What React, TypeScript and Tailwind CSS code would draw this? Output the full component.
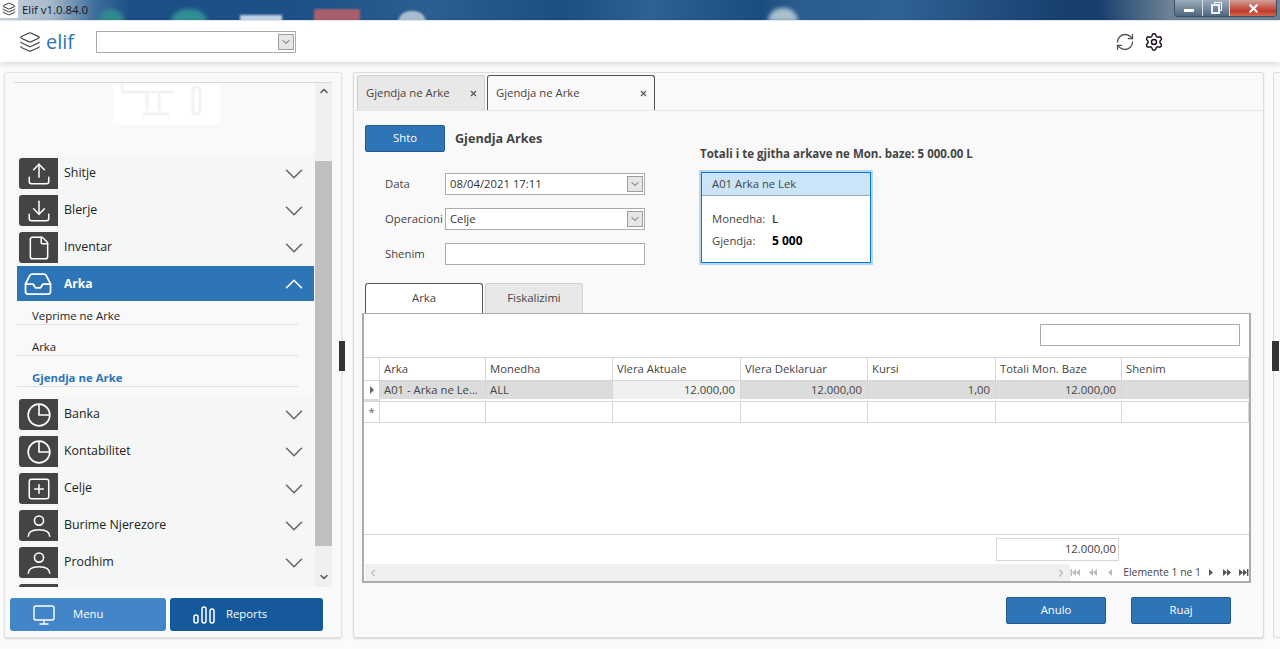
import { ChevronDown, ChevronUp, Download, File, Inbox, Layers, Monitor, RefreshCw, Settings, SquarePlus, Upload, X } from "lucide-react";
import type { ComponentType, ReactNode } from "react";

const font = "font-['Open_Sans','Noto_Sans',sans-serif]";

type IconProps = { className?: string; strokeWidth?: number };

// circle with one quarter marked, lucide's pie is offset so it doesn't match
const Pie = ({ className }: IconProps) => (
  <svg viewBox="0 0 24 24" fill="none" stroke="currentColor" strokeWidth="1.5" className={className}>
    <circle cx="12" cy="12" r="10" />
    <path d="M12 2v10h10" />
  </svg>
);

const Person = ({ className }: IconProps) => (
  <svg viewBox="0 0 24 24" fill="none" stroke="currentColor" strokeWidth="1.5" className={className}>
    <circle cx="12" cy="7" r="4.2" />
    <path d="M2 22c0-4.5 4.5-6.5 10-6.5s10 2 10 6.5" />
  </svg>
);

const MenuRow = ({ icon: Icon, label }: { icon: ComponentType<IconProps>; label: string }) => (
  <div className="h-[37px] flex items-center bg-[#f5f7f6] pl-[2px] shrink-0">
    <div className="w-[39px] h-[31px] bg-[#444444] rounded-l-[3px] flex items-center justify-center">
      <Icon className="w-[26px] h-[26px] text-white" strokeWidth={1.4} />
    </div>
    <span className="ml-[6px] text-[12.4px] text-[#222] flex-1">{label}</span>
    <ChevronDown className="w-[30px] h-[30px] mr-[6px] text-[#666]" strokeWidth={1.25} />
  </div>
);

const SubRow = ({ label, active, h }: { label: string; active?: boolean; h: string }) => (
  <div className={`${h} mr-[17px] border-b border-[#e0e0e0] flex items-end pl-[15px] text-[11.4px] leading-[16px] ${active ? "font-bold text-[#2e75b8]" : "text-[#222]"}`}>
    {label}
  </div>
);

const Combo = ({ value, className }: { value: string; className: string }) => (
  <div className={`${className} h-[22px] border border-[#ababab] bg-white flex items-center pl-[4px] pr-[1px] text-[11.3px] text-[#333]`}>
    <span className="flex-1">{value}</span>
    <div className="w-[16px] h-[16px] bg-[#e6e6e6] border border-[#9c9c9c] flex items-center justify-center">
      <ChevronDown className="w-[12px] h-[12px] text-[#555]" strokeWidth={2} />
    </div>
  </div>
);

const FormRow = ({ label, children }: { label: string; children: ReactNode }) => (
  <div className="flex items-center h-[22px]">
    <span className="w-[60px] ml-[20px] text-[11.3px] text-[#444]">{label}</span>
    {children}
  </div>
);

const PageTab = ({ active, w }: { active?: boolean; w: string }) => (
  <div className={`${w} h-[35px] rounded-t-[3px] border border-b-0 flex items-center pl-[8px] text-[11.3px] text-[#444] ${active ? "border-[#555] bg-[#f9f9f9]" : "border-[#cfcfcf] bg-[#e8e8e8]"}`}>
    <span className="flex-1">Gjendja ne Arke</span>
    <X className="w-[9px] h-[9px] mr-[6px] text-[#555]" strokeWidth={3} />
  </div>
);

const columns = ["Arka", "Monedha", "Vlera Aktuale", "Vlera Deklaruar", "Kursi", "Totali Mon. Baze", "Shenim"];
const gridCols = "grid grid-cols-[16px_106px_127px_128px_127px_128px_126px_1fr]";

const Cell = ({ children, right, className = "" }: { children?: ReactNode; right?: boolean; className?: string }) => (
  <div className={`border-r border-[#d6d6d6] flex items-center text-[11.3px] text-[#444] overflow-hidden whitespace-nowrap ${right ? "justify-end pr-[5px]" : "px-[4px]"} ${className}`}>
    {children}
  </div>
);

const Tri = ({ flip, bar, n = 1 }: { flip?: boolean; bar?: boolean; n?: number }) => (
  <svg width="11" height="9" viewBox="0 0 11 9" className={flip ? "-scale-x-100" : ""} fill="currentColor">
    {n === 2 && <path d="M1 1l4 3.5L1 8z" />}
    <path d={n === 2 ? "M5 1l4 3.5L5 8z" : "M3 1l4 3.5L3 8z"} />
    {bar && <rect x="9" y="1" width="1.4" height="7" />}
  </svg>
);

export default function App() {
  return (
    <div className={`${font} w-[1280px] h-[649px] overflow-hidden bg-[#fbfbfb] flex flex-col`}>
      {/* window title bar, blurred desktop shows through */}
      <div className="h-[21px] shrink-0 relative overflow-hidden border-b border-[#e8eef3] flex items-start bg-[linear-gradient(90deg,#c9d1da_0px,#a9bacb_50px,#3f6d9b_95px,#1c4f85_130px,#1d5086_300px,#2b5e92_430px,#1c4d83_560px,#2d6295_650px,#1a4c80_760px,#2a5c8e_800px,#2f6193_900px,#17406f_1060px,#18406e_1100px,#6f8296_1170px)]">
        <div className="absolute left-[98px] top-[9px] w-[26px] h-[16px] bg-[#2f8a8e] rounded-t-full blur-[2px]" />
        <div className="absolute left-[170px] top-[9px] w-[38px] h-[16px] bg-[#2f8f95] rounded-t-full blur-[2px]" />
        <div className="absolute left-[240px] top-[15px] w-[42px] h-[8px] bg-[#c2d4e8] blur-[1px]" />
        <div className="absolute left-[314px] top-[9px] w-[46px] h-[14px] bg-[#a85f6c] blur-[1px]" />
        <div className="absolute left-[398px] top-[11px] w-[28px] h-[12px] bg-[#a9bccf] rounded-t-full blur-[1px]" />
        <div className="absolute left-[768px] top-[8px] w-[30px] h-[14px] bg-[#a9c0cf] rounded-t-full blur-[2px]" />
        <div className="relative w-[18px] h-[18px] bg-white flex items-center justify-center">
          <Layers className="w-[14px] h-[14px] text-[#222]" strokeWidth={1.6} />
        </div>
        <span className="relative ml-[4px] text-[11.4px] leading-[20px] text-[#10161d] flex-1">Elif v1.0.84.0</span>
        <div className="relative mr-[3px] h-[17px] w-[103px] flex rounded-b-[4px] border border-t-0 border-[#3c4e61] overflow-hidden">
          <div className="w-[28px] border-r border-[#d7dde4] bg-[linear-gradient(#9eacbb,#4f6780)] flex items-center justify-center">
            <div className="w-[10px] h-[3px] mt-[5px] bg-white" />
          </div>
          <div className="w-[27px] border-r border-[#d7dde4] bg-[linear-gradient(#9eacbb,#4f6780)] flex items-center justify-center">
            <svg width="11" height="12" viewBox="0 0 11 12" fill="none" stroke="#fff">
              <path d="M3.5 2.5V.5h7v8H8.5" />
              <rect x="1" y="3" width="7" height="8" strokeWidth="2" stroke="#eef2f6" />
            </svg>
          </div>
          <div className="flex-1 bg-[linear-gradient(#d0a097,#c0392b_70%,#d26a50)] flex items-center justify-center">
            <X className="w-[13px] h-[13px] text-white" strokeWidth={4} />
          </div>
        </div>
      </div>

      {/* app header */}
      <div className="h-[41px] shrink-0 bg-white shadow-[0_2px_6px_rgba(0,0,0,0.14)] flex items-center relative">
        <Layers className="ml-[19px] w-[22px] h-[22px] text-[#444]" strokeWidth={1.3} />
        <span className="ml-[5px] text-[20px] leading-[24px] text-[#2e75b8] w-[50px]">elif</span>
        <Combo value="" className="w-[200px]" />
        <div className="flex-1" />
        <RefreshCw className="w-[20px] h-[20px] text-[#555]" strokeWidth={1.6} />
        <Settings className="ml-[9px] mr-[116px] w-[20px] h-[20px] text-[#1a0a1a]" strokeWidth={1.7} />
      </div>

      {/* body */}
      <div className="flex-1 min-h-0 flex pt-[10px] pb-[11px] pl-[4px] relative">
        {/* left panel */}
        <div className="w-[338px] shrink-0 bg-[#f9f9f9] border border-[#e4e4e4] rounded-[3px] shadow-[0_1px_2px_rgba(0,0,0,0.15)] pt-[9px] flex flex-col">
          <div className="ml-[9px] w-[318px] h-[505px] border-t border-[#d8d8d8] flex overflow-hidden">
            <div className="flex-1 min-w-0 overflow-hidden pl-[3px]">
              <div className="h-[42px] flex justify-center">
                <div className="w-[107px] bg-white">
                  <svg width="107" height="42" viewBox="0 0 107 42" fill="none" stroke="#f3f3f3" strokeWidth="3">
                    <path d="M9 0v6q0 3 3 3h50M34 10v18M46 10v18M30 31h26" />
                    <rect x="80" y="4" width="7" height="27" rx="3" />
                  </svg>
                </div>
              </div>
              <div className="h-[30px]" />
              <MenuRow icon={Upload} label="Shitje" />
              <MenuRow icon={Download} label="Blerje" />
              <MenuRow icon={File} label="Inventar" />
              <div className="h-[35px] mr-[1px] bg-[#2e75b8] flex items-center pl-[6px]">
                <Inbox className="w-[30px] h-[30px] text-white" strokeWidth={1.4} />
                <span className="ml-[11px] text-[12px] font-bold text-white flex-1">Arka</span>
                <ChevronUp className="w-[30px] h-[30px] mr-[5px] text-white" strokeWidth={1.25} />
              </div>
              <SubRow label="Veprime ne Arke" h="h-[24px]" />
              <SubRow label="Arka" h="h-[31px]" />
              <SubRow label="Gjendja ne Arke" active h="h-[31px]" />
              <div className="h-[9px]" />
              <MenuRow icon={Pie} label="Banka" />
              <MenuRow icon={Pie} label="Kontabilitet" />
              <MenuRow icon={SquarePlus} label="Celje" />
              <MenuRow icon={Person} label="Burime Njerezore" />
              <MenuRow icon={Person} label="Prodhim" />
              <MenuRow icon={Person} label="" />
            </div>
            <div className="w-[17px] shrink-0 bg-[#f0f0f0] flex flex-col items-center">
              <div className="h-[78px] w-full flex justify-center pt-[2px]">
                <ChevronUp className="w-[12px] h-[12px] text-[#555]" strokeWidth={3} />
              </div>
              <div className="w-full h-[385px] bg-[#bfbfbf]" />
              <ChevronDown className="mt-[25px] w-[12px] h-[12px] text-[#555]" strokeWidth={3} />
            </div>
          </div>
          <div className="ml-[5px] mt-[11px] flex gap-[4px]">
            <div className="w-[156px] h-[33px] rounded-[3px] bg-[#4285c8] flex items-center text-white text-[11.3px]">
              <Monitor className="ml-[22px] w-[24px] h-[24px]" strokeWidth={1.4} />
              <span className="ml-[17px]">Menu</span>
            </div>
            <div className="w-[153px] h-[33px] rounded-[3px] bg-[#15599b] flex items-center text-white text-[11.3px]">
              <svg width="22" height="18" viewBox="0 0 22 18" fill="none" stroke="currentColor" strokeWidth="1.5" className="ml-[23px]">
                <rect x="1" y="9" width="4" height="8" rx="2" />
                <rect x="9" y="1" width="4" height="16" rx="2" />
                <rect x="17" y="3" width="4" height="14" rx="2" />
              </svg>
              <span className="ml-[11px]">Reports</span>
            </div>
          </div>
        </div>

        {/* splitter handle */}
        <div className="absolute left-[339px] top-[279px] w-[6px] h-[30px] bg-[#333]" />

        {/* main panel */}
        <div className="ml-[11px] w-[911px] shrink-0 bg-[#f9f9f9] border border-[#dcdcdc] rounded-[3px] shadow-[0_1px_2px_rgba(0,0,0,0.15)] flex flex-col">
          <div className="h-[38px] pt-[2px] pl-[3px] flex items-end gap-[2px] border-b border-[#e6e6e6] shrink-0">
            <PageTab w="w-[128px]" />
            <PageTab w="w-[168px]" active />
          </div>

          <div className="pl-[11px] pt-[14px] pr-[11px] flex-1 flex flex-col min-h-0">
            <div className="flex h-[140px]">
              <div className="w-[335px]">
                <div className="flex items-center">
                  <div className="w-[80px] h-[27px] bg-[#2e75b8] border border-[#22598f] rounded-[2px] flex items-center justify-center text-white text-[11.3px]">Shto</div>
                  <span className="ml-[10px] mt-[1px] text-[12.6px] font-bold text-[#444]">Gjendja Arkes</span>
                </div>
                <div className="mt-[21px] flex flex-col gap-[13px]">
                  <FormRow label="Data"><Combo value="08/04/2021 17:11" className="w-[200px]" /></FormRow>
                  <FormRow label="Operacioni"><Combo value="Celje" className="w-[200px]" /></FormRow>
                  <FormRow label="Shenim"><div className="w-[200px] h-[22px] bg-white border border-[#ababab]" /></FormRow>
                </div>
              </div>
              <div className="pt-[21px]">
                <div className="text-[11.5px] leading-[16px] font-bold text-[#444] whitespace-nowrap">Totali i te gjitha arkave ne Mon. baze: 5 000.00 L</div>
                <div className="mt-[8px] -ml-[1px] w-[174px] h-[95px] border-2 border-[#b4d6ef]">
                  <div className="h-full border border-[#0a78d2] bg-white">
                    <div className="h-[23px] bg-[#cce4f7] border-b border-[#a0aab4] pl-[10px] flex items-center text-[11.3px] text-[#444]">A01 Arka ne Lek</div>
                    <div className="pl-[10px] pt-[12px] text-[11.3px] text-[#444]">
                      <div className="flex h-[22px] items-center"><span className="w-[60px]">Monedha:</span><span className="font-semibold text-[#333]">L</span></div>
                      <div className="flex h-[22px] items-center"><span className="w-[60px]">Gjendja:</span><span className="text-[12px] font-bold text-black">5 000</span></div>
                    </div>
                  </div>
                </div>
              </div>
            </div>

            {/* inner tabs */}
            <div className="mt-[18px] flex gap-[2px] h-[30px] shrink-0">
              <div className="w-[118px] border border-b-0 border-[#555] rounded-t-[3px] bg-white flex items-center justify-center text-[11.3px] text-[#444]">Arka</div>
              <div className="w-[98px] border border-b-0 border-[#d2d2d2] rounded-t-[3px] bg-[#e8e8e8] flex items-center justify-center text-[11.3px] text-[#444]">Fiskalizimi</div>
            </div>

            <div className="-ml-[3px] w-[889px] h-[270px] bg-white border-2 border-t border-[#acacac] flex flex-col">
              <div className="h-[44px] flex justify-end items-start pt-[10px] pr-[9px] border-b border-[#d6d6d6] shrink-0">
                <div className="w-[200px] h-[22px] border border-[#ababab] bg-white" />
              </div>
              <div className={`${gridCols} h-[23px] border-b border-[#d6d6d6] shrink-0`}>
                <Cell />
                {columns.map((c) => <Cell key={c}>{c}</Cell>)}
              </div>
              <div className={`${gridCols} h-[21px] border-b border-[#d6d6d6] shrink-0`}>
                <Cell className="justify-center !px-0 text-[#666]"><svg width="6" height="8" viewBox="0 0 6 8" fill="currentColor"><path d="M1 0l4 4-4 4z" /></svg></Cell>
                <Cell className="bg-[#dcdcdc]">A01 - Arka ne Le...</Cell>
                <Cell className="bg-[#dcdcdc]">ALL</Cell>
                <Cell right className="bg-[#f0f0f0]">12.000,00</Cell>
                <Cell right className="bg-[#dcdcdc]">12.000,00</Cell>
                <Cell right className="bg-[#dcdcdc]">1,00</Cell>
                <Cell right className="bg-[#dcdcdc]">12.000,00</Cell>
                <Cell className="bg-[#dcdcdc]" />
                <div className="bg-[#dcdcdc]" />
              </div>
              <div className={`${gridCols} h-[21px] border-b border-[#d6d6d6] shrink-0`}>
                <Cell className="justify-center !px-0 text-[#666]">*</Cell>
                <Cell /><Cell /><Cell /><Cell /><Cell /><Cell /><Cell />
              </div>
              <div className="flex-1 border-b border-[#d6d6d6]" />
              <div className="h-[29px] shrink-0 flex items-start pt-[3px] pl-[632px]">
                <div className="w-[123px] h-[23px] border border-[#d6d6d6] flex items-center justify-end pr-[2px] text-[11.3px] text-[#444]">12.000,00</div>
              </div>
              <div className="h-[17px] shrink-0 flex items-center">
                <div className="w-[706px] ml-[1px] h-full bg-[#f0f0f0] flex items-center justify-between px-[3px] text-[#bbb]">
                  <ChevronDown className="w-[10px] h-[10px] rotate-90" strokeWidth={3} />
                  <ChevronDown className="w-[12px] h-[12px] -rotate-90" strokeWidth={3} />
                </div>
                <div className="flex items-center text-[#bbb] gap-[6px]">
                  <Tri flip bar n={2} /><Tri flip n={2} /><Tri flip />
                </div>
                <span className="ml-[8px] text-[10.4px] text-[#444] whitespace-nowrap">Elemente 1 ne 1</span>
                <div className="flex items-center ml-[5px] text-[#555] gap-[5px]">
                  <Tri /><Tri n={2} /><Tri bar n={2} />
                </div>
              </div>
            </div>

            <div className="flex justify-end gap-[25px] mt-[14px] pr-[21px]">
              <div className="w-[100px] h-[27px] bg-[#2e75b8] border border-[#22598f] rounded-[2px] flex items-center justify-center text-white text-[11.3px]">Anulo</div>
              <div className="w-[100px] h-[27px] bg-[#2e75b8] border border-[#22598f] rounded-[2px] flex items-center justify-center text-white text-[11.3px]">Ruaj</div>
            </div>
          </div>
        </div>

        {/* right edge panel */}
        <div className="ml-[9px] flex-1 bg-[#f9f9f9] border border-r-0 border-[#dcdcdc] rounded-l-[3px]" />
        <div className="absolute left-[1272px] top-[279px] w-[7px] h-[30px] bg-[#333]" />
      </div>
    </div>
  );
}
